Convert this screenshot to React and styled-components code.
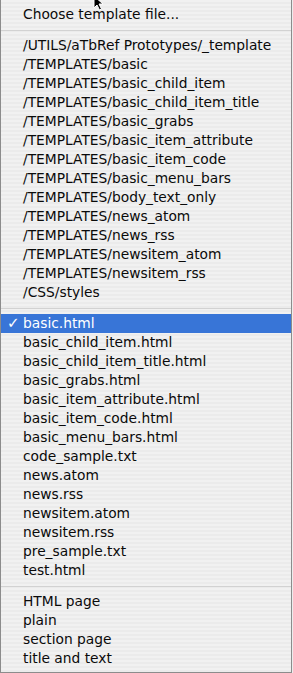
import React from "react";
import styled, { createGlobalStyle } from "styled-components";

const GlobalStyle = createGlobalStyle`
  html, body {
    margin: 0;
    padding: 0;
    background: #ececec;
  }
`;

const Menu = styled.ul`
  position: relative;
  box-sizing: border-box;
  width: 292px;
  height: 673px;
  margin: 0;
  padding: 5px 0 2px;
  list-style: none;
  border: 1px solid #8c8c8c;
  border-top: none;
  background: repeating-linear-gradient(
    to bottom,
    #f1f1f1 0px,
    #f1f1f1 2px,
    #ebebeb 2px,
    #ebebeb 4px
  );
  font-family: "DejaVu Sans", "Liberation Sans", sans-serif;
  font-size: 13.8px;
  color: #0a0a0a;
`;

const Item = styled.li`
  position: relative;
  height: 19px;
  line-height: 19px;
  padding-left: 22px;
  white-space: nowrap;
  background: ${(props) => (props.selected ? "#3875d7" : "transparent")};
  color: ${(props) => (props.selected ? "#fff" : "inherit")};
`;

const Check = styled.span`
  position: absolute;
  left: 6px;
  top: 0;
  font-size: 15px;
  font-weight: bold;
`;

const Separator = styled.li`
  height: 12px;
  display: flex;
  align-items: center;

  &::after {
    content: "";
    flex: 1;
    height: 1px;
    background: #d2d2d2;
  }
`;

const Cursor = styled.svg`
  position: absolute;
  left: 92px;
  top: -5px;
`;

const groups = [
  ["Choose template file..."],
  [
    "/UTILS/aTbRef Prototypes/_template",
    "/TEMPLATES/basic",
    "/TEMPLATES/basic_child_item",
    "/TEMPLATES/basic_child_item_title",
    "/TEMPLATES/basic_grabs",
    "/TEMPLATES/basic_item_attribute",
    "/TEMPLATES/basic_item_code",
    "/TEMPLATES/basic_menu_bars",
    "/TEMPLATES/body_text_only",
    "/TEMPLATES/news_atom",
    "/TEMPLATES/news_rss",
    "/TEMPLATES/newsitem_atom",
    "/TEMPLATES/newsitem_rss",
    "/CSS/styles",
  ],
  [
    "basic.html",
    "basic_child_item.html",
    "basic_child_item_title.html",
    "basic_grabs.html",
    "basic_item_attribute.html",
    "basic_item_code.html",
    "basic_menu_bars.html",
    "code_sample.txt",
    "news.atom",
    "news.rss",
    "newsitem.atom",
    "newsitem.rss",
    "pre_sample.txt",
    "test.html",
  ],
  ["HTML page", "plain", "section page", "title and text"],
];

const App = () => {
  return (
    <>
      <GlobalStyle />
      <Menu>
        {groups.map((group, g) => (
          <React.Fragment key={g}>
            {g > 0 && <Separator />}
            {group.map((label) => {
              const selected = label === "basic.html";
              return (
                <Item key={label} selected={selected}>
                  {selected && <Check>✓</Check>}
                  {label}
                </Item>
              );
            })}
          </React.Fragment>
        ))}
        <Cursor width="14" height="16" viewBox="0 0 14 16">
          <path
            d="M1 1 L1 13 L4 10 L6.5 15 L8.5 14 L6 9 L10 9 Z"
            fill="#000"
            stroke="#fff"
            strokeWidth="1"
          />
        </Cursor>
      </Menu>
    </>
  );
};

export default App;
